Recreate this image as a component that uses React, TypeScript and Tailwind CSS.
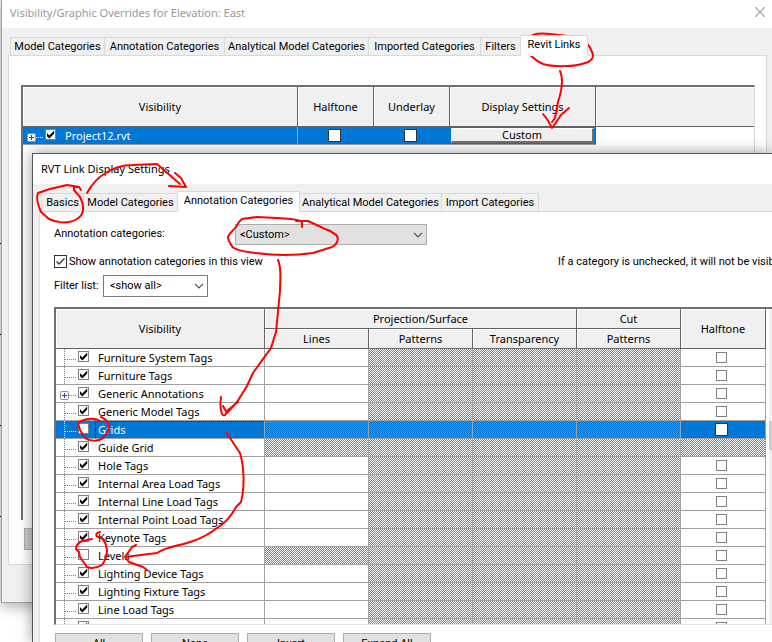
import { useState } from "react";
import clsx from "clsx";

interface Category {
  name: string;
  checked: boolean;
  expandable?: boolean;
  selected?: boolean;
  lines?: boolean;
  halftone?: boolean;
}

const categories: Category[] = [
  { name: "Furniture System Tags", checked: true },
  { name: "Furniture Tags", checked: true },
  { name: "Generic Annotations", checked: true, expandable: true },
  { name: "Generic Model Tags", checked: true },
  { name: "Grids", checked: false, selected: true, lines: false },
  { name: "Guide Grid", checked: true, lines: false, halftone: false },
  { name: "Hole Tags", checked: true },
  { name: "Internal Area Load Tags", checked: true },
  { name: "Internal Line Load Tags", checked: true },
  { name: "Internal Point Load Tags", checked: true },
  { name: "Keynote Tags", checked: true },
  { name: "Levels", checked: false, lines: false },
  { name: "Lighting Device Tags", checked: true },
  { name: "Lighting Fixture Tags", checked: true },
  { name: "Line Load Tags", checked: true },
  { name: "Mass Floor Tags", checked: true },
];

const outerTabs = [
  { name: "Model Categories", width: "w-[95px]" },
  { name: "Annotation Categories", width: "w-[121px]" },
  { name: "Analytical Model Categories", width: "w-[145px]" },
  { name: "Imported Categories", width: "w-[113px]" },
  { name: "Filters", width: "w-[41px]" },
  { name: "Revit Links", width: "w-[68px]", active: true },
];

const innerTabs = [
  { name: "Basics", width: "w-[43px]" },
  { name: "Model Categories", width: "w-[95px]" },
  { name: "Annotation Categories", width: "w-[123px]", active: true },
  { name: "Analytical Model Categories", width: "w-[143px]" },
  { name: "Import Categories", width: "w-[98px]" },
];

const HATCH =
  "bg-[conic-gradient(#808080_25%,#ffffff_0_50%,#808080_0_75%,#ffffff_0)] bg-[length:2px_2px]";
const HATCH_SELECTED =
  "bg-[conic-gradient(#808080_25%,#0078d7_0_50%,#808080_0_75%,#0078d7_0)] bg-[length:2px_2px]";
const TABLE_FONT = "font-['Noto_Sans',sans-serif] text-[11px] leading-[18px]";

function Tabs({ tabs }: { tabs: { name: string; width: string; active?: boolean }[] }) {
  return (
    <div role="tablist" className="relative -mb-px flex h-[28px] items-end pl-0.5">
      {tabs.map((t) => (
        <button
          key={t.name}
          role="tab"
          aria-selected={!!t.active}
          className={clsx(
            "-mr-px shrink-0 whitespace-nowrap border border-[#d9d9d9] text-center last:mr-0",
            t.width,
            t.active ? "relative z-10 h-[21px] border-b-white bg-white pb-0.5" : "h-[19px] bg-[#f0f0f0]"
          )}
        >
          {t.name}
        </button>
      ))}
    </div>
  );
}

interface TickProps {
  label: string;
  checked?: boolean;
  className: string;
}

function Tick({ label, checked = false, className }: TickProps) {
  const [on, setOn] = useState(checked);
  return (
    <span className="relative inline-flex shrink-0">
      <input
        type="checkbox"
        aria-label={label}
        checked={on}
        onChange={() => setOn(!on)}
        className={clsx("block appearance-none border bg-white", className)}
      />
      {on && (
        <svg viewBox="0 0 11 11" className="pointer-events-none absolute left-0 top-0 h-[11px] w-[11px]">
          <path d="M2 4.2 4.4 6.4 9.2 1.6v3L4.4 9.4 2 7.2Z" fill="#000" />
        </svg>
      )}
    </span>
  );
}

function PlusBox() {
  return (
    <svg viewBox="0 0 9 9" className="mt-1 h-[9px] w-[9px] shrink-0">
      <rect x="0.5" y="0.5" width="8" height="8" rx="1" fill="#f5f5f5" stroke="#919191" />
      <path d="M2 4.5h5M4.5 2v5" stroke="#2a4a9c" />
    </svg>
  );
}

function Chevron() {
  return (
    <svg viewBox="0 0 10 6" className="pointer-events-none absolute right-1 top-2 h-1.5 w-2.5">
      <path d="M1 0.8 5 4.8 9 0.8" fill="none" stroke="#505050" strokeWidth="1.2" />
    </svg>
  );
}

function HeadCell({ children, className, ...rest }: React.ComponentProps<"th">) {
  return (
    <th
      {...rest}
      className={clsx(
        "border-b border-r border-[#646464] bg-[#f0f0f0] p-0 text-center font-normal shadow-[inset_1px_1px_0_#ffffff]",
        className
      )}
    >
      {children}
    </th>
  );
}

function LinksTable() {
  return (
    <div className="h-[435px] border-l-2 border-t-2 border-r border-l-[#707070] border-t-[#707070] border-r-[#d9d9d9]">
      <table className={clsx("w-full table-fixed border-separate border-spacing-0", TABLE_FONT)}>
        <colgroup>
          <col className="w-[275px]" />
          <col className="w-[76px]" />
          <col className="w-[76px]" />
          <col className="w-[146px]" />
          <col />
        </colgroup>
        <thead>
          <tr className="h-[40px]">
            <HeadCell>Visibility</HeadCell>
            <HeadCell>Halftone</HeadCell>
            <HeadCell>Underlay</HeadCell>
            <HeadCell>Display Settings</HeadCell>
            <HeadCell className="border-r-0" />
          </tr>
        </thead>
        <tbody>
          <tr className="h-[18px] bg-[#0078d7] text-white">
            <td className="border-b border-r border-[#a0a0a0] p-0">
              <div className="flex h-[17px] items-center pl-1">
                <PlusBox />
                <span className="mr-0.5 mt-1 w-[7px] border-t border-dotted border-white" />
                <Tick label="Project12.rvt visible" checked className="mb-0.5 h-[11px] w-[11px] border-[#808080]" />
                <span className="pl-[9px]">Project12.rvt</span>
              </div>
            </td>
            <td className="border-b border-[#a0a0a0] p-0">
              <div className="flex h-[17px] items-center justify-center pr-1">
                <Tick label="Halftone" className="h-[13px] w-[13px] border-[#333333]" />
              </div>
            </td>
            <td className="border-b border-[#a0a0a0] p-0">
              <div className="flex h-[17px] items-center justify-center pr-1">
                <Tick label="Underlay" className="h-[13px] w-[13px] border-[#333333]" />
              </div>
            </td>
            <td className="border-b border-[#a0a0a0] p-0">
              <button className="mx-px block h-[15px] w-[143px] border border-b-2 border-r-2 border-[#707070] border-l-white border-t-white bg-[#f0f0f0] text-center leading-3 text-black">
                Custom
              </button>
            </td>
            <td className="bg-white p-0" />
          </tr>
        </tbody>
      </table>
    </div>
  );
}

function CategoryRow({ row }: { row: Category }) {
  const hatch = row.selected ? HATCH_SELECTED : HATCH;
  const cell = "border-b border-r border-[#a0a0a0] p-0";
  const treeLine = row.selected ? "border-white" : "border-[#808080]";
  return (
    <tr className={clsx("h-[18px]", row.selected ? "bg-[#0078d7] text-white" : "bg-white")}>
      <td className={cell}>
        <div className="flex h-[17px] items-center">
          <span className={clsx("flex w-[22px] items-center self-stretch", row.expandable ? "pl-1" : "pl-2")}>
            {row.expandable ? <PlusBox /> : <span className={clsx("self-stretch border-l border-dotted", treeLine)} />}
            <span className={clsx("mr-0.5 mt-1 flex-1 border-t border-dotted", treeLine)} />
          </span>
          <Tick label={row.name} checked={row.checked} className="mb-0.5 h-[11px] w-[11px] border-[#808080]" />
          <span
            className={clsx(
              "ml-1.5 h-[17px] flex-1",
              row.selected ? "border-l border-t border-dotted border-[#00305a] pl-0.5 leading-4" : "pl-[3px]"
            )}
          >
            {row.name}
          </span>
        </div>
      </td>
      <td className={clsx(cell, row.lines === false && hatch)} />
      <td className={clsx(cell, hatch)} />
      <td className={clsx(cell, hatch)} />
      <td className={clsx(cell, hatch)} />
      <td className={clsx(cell, row.halftone === false && hatch)}>
        {row.halftone !== false && (
          <div className="flex h-[17px] items-center justify-center pr-1">
            <Tick
              label={`${row.name} halftone`}
              className={row.selected ? "h-[13px] w-[13px] border-[#333333]" : "h-[11px] w-[11px] border-[#808080]"}
            />
          </div>
        )}
      </td>
    </tr>
  );
}

function CategoryTable() {
  return (
    <div className="mt-2.5 flex h-[318px] overflow-hidden border-b border-l-2 border-t-2 border-b-[#e3e3e3] border-l-[#707070] border-t-[#707070]">
      <div className="flex-1">
        <table className={clsx("w-full table-fixed border-separate border-spacing-0", TABLE_FONT)}>
          <colgroup>
            <col />
            <col className="w-[104px]" />
            <col className="w-[104px]" />
            <col className="w-[104px]" />
            <col className="w-[104px]" />
            <col className="w-[85px]" />
          </colgroup>
          <thead>
            <tr className="h-[20px]">
              <HeadCell rowSpan={2}>Visibility</HeadCell>
              <HeadCell colSpan={3}>Projection/Surface</HeadCell>
              <HeadCell>Cut</HeadCell>
              <HeadCell rowSpan={2}>Halftone</HeadCell>
            </tr>
            <tr className="h-[20px]">
              <HeadCell>Lines</HeadCell>
              <HeadCell>Patterns</HeadCell>
              <HeadCell>Transparency</HeadCell>
              <HeadCell>Patterns</HeadCell>
            </tr>
          </thead>
          <tbody>
            {categories.map((c) => (
              <CategoryRow key={c.name} row={c} />
            ))}
          </tbody>
        </table>
      </div>
      <div className="ml-[3px] w-[3px] bg-[#f0f0f0] pt-28">
        <div className="h-[29px] bg-[#cdcdcd]" />
      </div>
    </div>
  );
}

function LinkSettingsDialog() {
  return (
    <section
      aria-label="RVT Link Display Settings"
      className="absolute bottom-0 left-8 right-0 top-[153px] overflow-hidden border-l border-t border-[#555555] bg-[#f0f0f0] shadow-[0_0_14px_rgba(0,0,0,0.4)]"
    >
      <h2 className="h-[30px] bg-white pl-2 font-['Noto_Sans',sans-serif] leading-[30px]">
        RVT Link Display Settings
      </h2>
      <div className="ml-1.5">
        <Tabs tabs={innerTabs} />
        <div className="border-l border-t border-[#d9d9d9] bg-white pb-8 pl-3.5 pt-3">
          <div className="flex h-[21px] items-center">
            <label htmlFor="annotation" className="w-[181px] pb-0.5">
              Annotation categories:
            </label>
            <div className="relative">
              <select
                id="annotation"
                className="block h-[21px] w-[192px] appearance-none border border-[#adadad] bg-[#e1e1e1] pl-1"
              >
                <option>&lt;Custom&gt;</option>
              </select>
              <Chevron />
            </div>
          </div>
          <div className="mt-1.5 flex h-[21px] items-center">
            <label className="flex items-center gap-0.5">
              <span className="relative flex">
                <input
                  type="checkbox"
                  defaultChecked
                  className="peer block h-[13px] w-[13px] appearance-none border border-[#333333] bg-white"
                />
                <svg
                  viewBox="0 0 13 13"
                  className="pointer-events-none absolute inset-0 hidden h-[13px] w-[13px] peer-checked:block"
                >
                  <path d="M2.5 6.5 5 9l5.5-5.5" fill="none" stroke="#333" strokeWidth="1.3" />
                </svg>
              </span>
              Show annotation categories in this view
            </label>
            <p className="ml-auto w-[214px] overflow-hidden whitespace-nowrap">
              If a category is unchecked, it will not be visible.
            </p>
          </div>
          <div className="mt-[3px] flex h-[22px] items-center">
            <label htmlFor="filter" className="w-[49px] whitespace-nowrap">
              Filter list:
            </label>
            <div className="relative">
              <select
                id="filter"
                className="block h-[22px] w-[105px] appearance-none border border-[#7a7a7a] bg-white pl-1.5"
              >
                <option>&lt;show all&gt;</option>
              </select>
              <Chevron />
            </div>
          </div>
          <CategoryTable />
          <div className="mt-2 flex gap-2 pl-px">
            {["All", "None", "Invert", "Expand All"].map((label) => (
              <button key={label} className="h-[22px] w-[88px] border border-[#adadad] bg-[#e1e1e1]">
                {label}
              </button>
            ))}
          </div>
        </div>
      </div>
    </section>
  );
}

function Markup() {
  return (
    <svg
      viewBox="0 0 772 642"
      className="pointer-events-none absolute left-0 top-0 h-[642px] w-[772px]"
      fill="none"
      stroke="#ff0000"
      strokeWidth="2"
      strokeLinecap="round"
      strokeLinejoin="round"
    >
      {/* Revit Links and the arrow to its button */}
      <path d="M549 34 562 37 577 37C584 40 590 46 592 52 595 58 590 62 585 63 575 67 553 67 543 64 535 61 532 56 529 54 524 52 524 43 527 39 532 33 543 33 550 34L577 37" />
      <path d="M560 71C564 80 561 93 558 102L555 118 552 122M543 114 547 119 552 128 561 115 569 108" />
      {/* Basics and the arrow to the annotation tab */}
      <path d="M81 190 79 187 74 187 74 190 80 197C84 205 85 214 77 219 67 225 55 222 49 219L41 212C38 205 36 197 38 193L50 189 67 185 79 187" />
      <path d="M87 193C92 184 96 179 104 174 114 167 124 165 133 165L157 164 165 171 180 184M175 173 181 178 186 187 169 186" />
      {/* Custom and the arrow to Grids */}
      <path d="M302 227 302 222C296 218 286 219 277 218L257 217 242 219C237 223 238 225 235 228 232 232 228 234 228 238 229 242 232 247 234 248 241 252 250 252 256 253 270 255 292 256 313 253L332 247C339 243 340 236 333 233 330 230 326 230 323 228L308 221 296 221" />
      <path d="M278 260C282 268 280 280 280 291L276 332 271 348C266 355 262 360 258 366L253 373 247 386 237 402 227 413M221 397C220 405 221 412 222 414 225 418 226 413 228 410L238 402M223 406 227 413" />
      {/* Grids, then Levels */}
      <path d="M101 417C105 419 109 421 109 428 108 432 106 435 103 438 98 442 89 441 85 438L80 430 78 423C83 419 94 417 100 421" />
      <path d="M226 432 230 438 240 453C244 466 245 487 241 502L236 507C231 517 225 523 217 528 208 535 202 538 193 541 180 546 168 546 157 553L125 557M136 545 132 547 125 557 129 562 143 567 147 570" />
      <path d="M92 539 82 541C78 543 76 546 76 549L79 552 80 557 87 567C92 569 97 568 102 565 105 561 107 555 107 550 106 545 105 542 104 540L101 537C96 538 94 533 100 532" />
    </svg>
  );
}

export default function App() {
  return (
    <main className="relative h-screen overflow-hidden bg-white font-[Roboto,sans-serif] text-[11px] leading-4 text-black">
      {/* drawing canvas showing past the window edge */}
      <div className="flex h-[602px] w-px flex-col gap-[90px] bg-[#f0f0f0] pt-[243px]">
        <span className="h-px bg-black" />
        <span className="h-px bg-black" />
        <span className="h-px bg-black" />
        <span className="h-px bg-black" />
      </div>

      <section
        aria-label="Visibility/Graphic Overrides"
        className="absolute left-px right-0 top-0 border-b border-l border-[#a0a0a0] bg-[#f0f0f0] pb-[37px] shadow-[0_4px_12px_rgba(0,0,0,0.3)]"
      >
        <header className="flex h-[28px] items-center justify-between bg-white pl-2 pr-[7px]">
          <h1 className="pb-0.5 font-['Noto_Sans',sans-serif] text-[#999999]">
            Visibility/Graphic Overrides for Elevation: East
          </h1>
          <button aria-label="Close" className="pb-1">
            <svg viewBox="0 0 10 10" className="h-2.5 w-2.5">
              <path d="M0 0 10 10M10 0 0 10" stroke="#999999" strokeWidth="1.1" />
            </svg>
          </button>
        </header>
        <div className="ml-1.5 mr-[5px]">
          <Tabs tabs={outerTabs} />
          <div className="border border-[#d9d9d9] bg-white pb-3.5 pl-3 pr-[11px] pt-[29px]">
            <LinksTable />
            <div className="mt-2 pl-[3px]">
              <button className="block h-[22px] w-[88px] border border-[#adadad] bg-[#cccccc]">All</button>
            </div>
          </div>
        </div>
      </section>

      <LinkSettingsDialog />
      <Markup />
    </main>
  );
}
